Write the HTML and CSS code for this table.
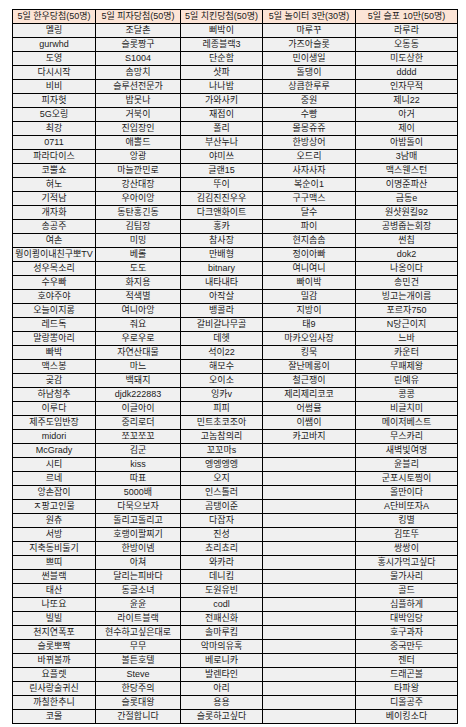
FILE: index.html
```html
<!DOCTYPE html>
<html lang="ko">
<head>
<meta charset="utf-8">
<title>당첨자 명단</title>
<link rel="stylesheet" href="styles.css">
</head>
<body>
<table class="winners">
<colgroup>
<col class="c1"><col class="c2"><col class="c3"><col class="c4"><col class="c5">
</colgroup>
<thead>
<tr><th>5일 한우당첨(50명)</th><th>5일 피자당첨(50명)</th><th>5일 치킨당첨(50명)</th><th>5일 놀이터 3만(30명)</th><th>5일 슬포 10만(50명)</th></tr>
</thead>
<tbody>
<tr><td>멜링</td><td>조달촌</td><td>뻐박이</td><td>마루꾸</td><td>라루라</td></tr>
<tr><td>gurwhd</td><td>슬롯짱구</td><td>레종블랙3</td><td>가즈아슬롯</td><td>오동동</td></tr>
<tr><td>도영</td><td>S1004</td><td>단순함</td><td>민이생일</td><td>미도상한</td></tr>
<tr><td>다시시작</td><td>솜망치</td><td>샷파</td><td>돌댕이</td><td>dddd</td></tr>
<tr><td>비비</td><td>슬루션전문가</td><td>나나밤</td><td>상큼한루루</td><td>인자무적</td></tr>
<tr><td>피자헛</td><td>밥못나</td><td>가와사키</td><td>중원</td><td>제니22</td></tr>
<tr><td>5G오링</td><td>거북이</td><td>재접이</td><td>수빵</td><td>아거</td></tr>
<tr><td>최강</td><td>진입장인</td><td>폴리</td><td>몰몽쥬쥬</td><td>제이</td></tr>
<tr><td>0711</td><td>애뽈드</td><td>부산누나</td><td>한방상어</td><td>아밤돌이</td></tr>
<tr><td>파라다이스</td><td>앙광</td><td>야미쓰</td><td>오드리</td><td>3남매</td></tr>
<tr><td>코뿔쇼</td><td>마늘깐민로</td><td>글랜15</td><td>사자사자</td><td>맥스웬스턴</td></tr>
<tr><td>혀노</td><td>강산대장</td><td>뚜이</td><td>복순이1</td><td>이명준파산</td></tr>
<tr><td>기적남</td><td>우아이앙</td><td>김김진진우우</td><td>구구맥스</td><td>금동e</td></tr>
<tr><td>개자화</td><td>동탄홍긴동</td><td>다크앤화이트</td><td>달수</td><td>원샷원킬92</td></tr>
<tr><td>송공주</td><td>김팀장</td><td>홍카</td><td>파이</td><td>공병줍는회장</td></tr>
<tr><td>여손</td><td>미밍</td><td>참사장</td><td>현지솜솜</td><td>썬칩</td></tr>
<tr><td>뭥이쾽이내친구뽀TV</td><td>베롤</td><td>만배형</td><td>정이아빠</td><td>dok2</td></tr>
<tr><td>성우목소리</td><td>도도</td><td>bitnary</td><td>여니여니</td><td>나옹이다</td></tr>
<tr><td>수우빠</td><td>화지용</td><td>내타내타</td><td>빠이박</td><td>송민건</td></tr>
<tr><td>호야주야</td><td>적색별</td><td>아작살</td><td>밀감</td><td>빙고는개이름</td></tr>
<tr><td>오늘이지롱</td><td>여니아앙</td><td>뱅콜라</td><td>지방이</td><td>포르자750</td></tr>
<tr><td>레드독</td><td>줘요</td><td>갈비갈나무골</td><td>태9</td><td>N당근이지</td></tr>
<tr><td>말랑뽕아리</td><td>우로우로</td><td>데헷</td><td>마카오임사장</td><td>느바</td></tr>
<tr><td>빠박</td><td>자연산대물</td><td>석이22</td><td>킹묵</td><td>카운터</td></tr>
<tr><td>맥스봉</td><td>마느</td><td>해모수</td><td>잘난메롱이</td><td>무패제왕</td></tr>
<tr><td>곶감</td><td>백돼지</td><td>오이소</td><td>철근쟁이</td><td>린예유</td></tr>
<tr><td>하남청추</td><td>djdk222883</td><td>잉카v</td><td>제리제리코코</td><td>콩콩</td></tr>
<tr><td>이루다</td><td>이글아이</td><td>피피</td><td>어썸뮬</td><td>비글치미</td></tr>
<tr><td>제주도임반장</td><td>중리로더</td><td>민트초코조아</td><td>이쌤이</td><td>메이저베스트</td></tr>
<tr><td>midori</td><td>쪼꼬쪼꼬</td><td>고놈참의리</td><td>카고바지</td><td>무스카리</td></tr>
<tr><td>McGrady</td><td>김군</td><td>꼬꼬마s</td><td></td><td>새벽빛여명</td></tr>
<tr><td>시티</td><td>kiss</td><td>엥엥엥엥</td><td></td><td>윤블리</td></tr>
<tr><td>르네</td><td>따표</td><td>오지</td><td></td><td>군포시토찡이</td></tr>
<tr><td>앙손잡이</td><td>5000배</td><td>인스톨러</td><td></td><td>올만이다</td></tr>
<tr><td>ㅈ팡고인물</td><td>다묵으보자</td><td>곰탱이준</td><td></td><td>A단비또자A</td></tr>
<tr><td>원츄</td><td>돌리고돌리고</td><td>다잡자</td><td></td><td>킹별</td></tr>
<tr><td>서방</td><td>호랭이팔찌기</td><td>진성</td><td></td><td>김또뚜</td></tr>
<tr><td>지축동비둘기</td><td>한방이넴</td><td>쵸리쵸리</td><td></td><td>쌍쌍이</td></tr>
<tr><td>쁘띠</td><td>아쳐</td><td>와카라</td><td></td><td>홍시가먹고싶다</td></tr>
<tr><td>썬블랙</td><td>달리는피바다</td><td>데니킴</td><td></td><td>물가사리</td></tr>
<tr><td>태산</td><td>동굴소녀</td><td>도원유빈</td><td></td><td>골드</td></tr>
<tr><td>나또요</td><td>윤윤</td><td>codl</td><td></td><td>심플하게</td></tr>
<tr><td>빌빌</td><td>라이트블랙</td><td>전패신화</td><td></td><td>대박임당</td></tr>
<tr><td>천지연폭포</td><td>현수하고싶은대로</td><td>솔마루킴</td><td></td><td>호구과자</td></tr>
<tr><td>슬롯뽀짝</td><td>무무</td><td>악마의유혹</td><td></td><td>중국만두</td></tr>
<tr><td>바뀌볼까</td><td>볼튼호텔</td><td>베로니카</td><td></td><td>젠터</td></tr>
<tr><td>요플렛</td><td>Steve</td><td>발렌타인</td><td></td><td>드래곤볼</td></tr>
<tr><td>린사랑술귀신</td><td>한당주의</td><td>아리</td><td></td><td>타파왕</td></tr>
<tr><td>까칠한추니</td><td>슬롯대왕</td><td>용용</td><td></td><td>디올공주</td></tr>
<tr><td>코몰</td><td>간절합니다</td><td>슬롯하고싶다</td><td></td><td>베이킹소다</td></tr>
</tbody>
</table>
</body>
</html>
```

FILE: styles.css
```css
html, body {
  margin: 0;
  padding: 0;
  background: #ffffff;
}

body {
  padding: 9px 0 0 12px;
  font-family: "Liberation Sans", "Noto Sans CJK KR", sans-serif;
  color: #1a1a1a;
}

.winners {
  border-collapse: collapse;
  table-layout: fixed;
  width: 445px;
}

.c1 { width: 83px; }
.c2 { width: 85px; }
.c3 { width: 82px; }
.c4 { width: 93px; }
.c5 { width: 102px; }

.winners th,
.winners td {
  border: 1px solid #000000;
  height: 13px;
  padding: 0;
  font-size: 9px;
  line-height: 13px;
  text-align: center;
  white-space: nowrap;
  overflow: hidden;
}

.winners th {
  background: #fce4d6;
  font-weight: normal;
}

.winners td {
  background: #f0f0f0;
}
```
